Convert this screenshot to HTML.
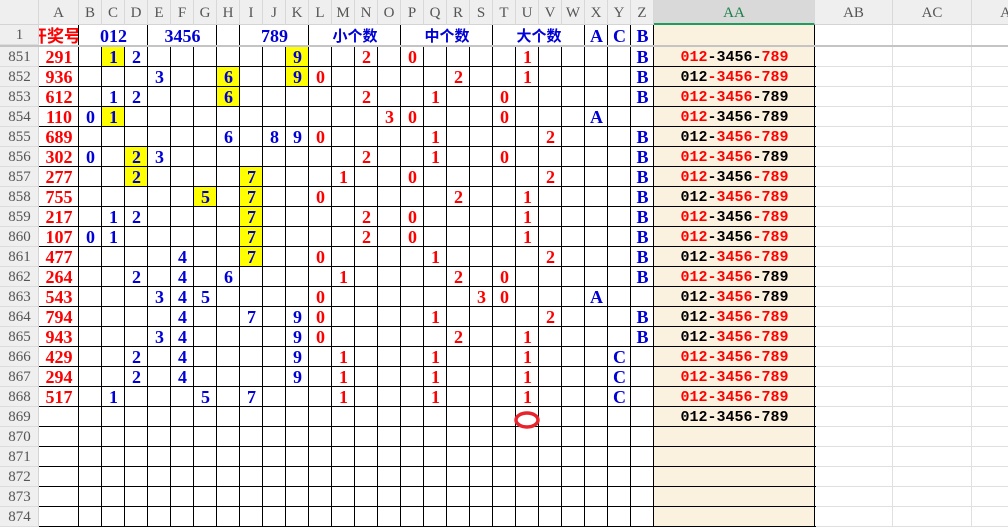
<!DOCTYPE html>
<html><head><meta charset="utf-8"><style>
*{margin:0;padding:0;box-sizing:border-box}
body{width:1008px;height:526px;overflow:hidden;background:#fff;position:relative;font-family:"Liberation Serif",serif}
.hd{position:absolute;top:0;left:0;width:1008px;height:25px;background:#efefef;border-bottom:1px solid #d4d4d4}
.hd span{position:absolute;top:0;height:25px;line-height:26px;text-align:center;font-size:15px;color:#555;border-right:1px solid #d8d8d8}
.rh{position:absolute;left:0;top:25px;width:39px;height:501px;background:#efefef;border-right:1px solid #d4d4d4}
.rn{position:absolute;left:0;width:39px;height:20px;line-height:21px;text-align:center;font-size:15px;color:#555;border-bottom:1px solid #dcdcdc}
.row{position:absolute;left:0;width:1008px;height:20px}
.row i{position:absolute;top:0;height:20px;width:23px;line-height:21px;text-align:center;font-style:normal;font-weight:bold;font-size:18px}
.row i.A{left:39px;width:40px;color:#f00}
.y{background:#ff0}
.b{color:#0000d8}.r{color:#f00}
.B{left:79px}.C{left:102px}.D{left:125px}.E{left:148px}.F{left:171px}.G{left:194px}.H{left:217px}.I{left:240px}.J{left:263px}.K{left:286px}.L{left:309px}.M{left:332px}.N{left:355px}.O{left:378px}.P{left:401px}.Q{left:424px}.R{left:447px}.S{left:470px}.T{left:493px}.U{left:516px}.V{left:539px}.W{left:562px}.X{left:585px}.Y{left:608px}.Z{left:631px}
.row i.AA{left:654px;width:161px;font-size:15px;color:#000;font-weight:bold;font-family:"Liberation Mono",monospace}
.row i.AA em{font-style:normal;color:#f00}
.cream{position:absolute;left:654px;top:25px;width:161px;height:501px;background:#fbf1df}
.hl{position:absolute;left:39px;top:47px;width:777px;height:480px;background:repeating-linear-gradient(to bottom,transparent 0 19px,#000 19px 20px)}
.vl{position:absolute;top:47px;width:1px;height:480px;background:#000}
.vg{position:absolute;left:78px;top:47px;width:577px;height:480px;background:repeating-linear-gradient(to right,#000 0 1px,transparent 1px 23px)}
.lg{position:absolute;left:816px;top:47px;width:192px;height:480px;background:repeating-linear-gradient(to bottom,transparent 0 19px,#e0e0e0 19px 20px)}
.frz{position:absolute;left:0;top:45px;width:1008px;height:2px;background:#c4c4c4}
.t1{position:absolute;top:25px;height:20px;line-height:22px;text-align:center;font-weight:bold;font-size:18px;color:#0000d8;font-family:"Liberation Serif","Noto Sans CJK SC",serif}
.cj{font-family:"Noto Sans CJK SC",sans-serif;font-size:15px;line-height:21px}
.v1{position:absolute;top:25px;height:20px;width:1px;background:#000}
</style></head><body>
<div class="hd">
<span style="left:0;width:39px"></span><span style="left:39px;width:40px">A</span>
<span style="left:79px;width:23px">B</span><span style="left:102px;width:23px">C</span><span style="left:125px;width:23px">D</span><span style="left:148px;width:23px">E</span><span style="left:171px;width:23px">F</span><span style="left:194px;width:23px">G</span><span style="left:217px;width:23px">H</span><span style="left:240px;width:23px">I</span><span style="left:263px;width:23px">J</span><span style="left:286px;width:23px">K</span><span style="left:309px;width:23px">L</span><span style="left:332px;width:23px">M</span><span style="left:355px;width:23px">N</span><span style="left:378px;width:23px">O</span><span style="left:401px;width:23px">P</span><span style="left:424px;width:23px">Q</span><span style="left:447px;width:23px">R</span><span style="left:470px;width:23px">S</span><span style="left:493px;width:23px">T</span><span style="left:516px;width:23px">U</span><span style="left:539px;width:23px">V</span><span style="left:562px;width:23px">W</span><span style="left:585px;width:23px">X</span><span style="left:608px;width:23px">Y</span><span style="left:631px;width:23px">Z</span>
<span style="left:654px;width:161px;background:#d9d9d9;color:#1a7f4b;border-bottom:2px solid #1f9d5f;height:25px">AA</span>
<span style="left:815px;width:78px">AB</span><span style="left:893px;width:79px">AC</span><span style="left:972px;width:79px">AD</span>
</div>
<div class="cream"></div>
<div class="rh">
<div class="rn" style="top:0">1</div>
<div class="rn" style="top:22px">851</div><div class="rn" style="top:42px">852</div><div class="rn" style="top:62px">853</div><div class="rn" style="top:82px">854</div><div class="rn" style="top:102px">855</div><div class="rn" style="top:122px">856</div><div class="rn" style="top:142px">857</div><div class="rn" style="top:162px">858</div><div class="rn" style="top:182px">859</div><div class="rn" style="top:202px">860</div><div class="rn" style="top:222px">861</div><div class="rn" style="top:242px">862</div><div class="rn" style="top:262px">863</div><div class="rn" style="top:282px">864</div><div class="rn" style="top:302px">865</div><div class="rn" style="top:322px">866</div><div class="rn" style="top:342px">867</div><div class="rn" style="top:362px">868</div><div class="rn" style="top:382px">869</div><div class="rn" style="top:402px">870</div><div class="rn" style="top:422px">871</div><div class="rn" style="top:442px">872</div><div class="rn" style="top:462px">873</div><div class="rn" style="top:482px">874</div>
</div>
<div style="position:absolute;left:39px;top:25px;width:40px;height:20px;overflow:hidden"><div class="cj" style="position:absolute;right:-2px;top:0;white-space:nowrap;color:#f00;font-weight:bold;font-size:17px;line-height:20px">开奖号</div></div>
<div class="t1" style="left:79px;width:69px">012</div>
<div class="t1" style="left:148px;width:69px">3456</div>
<div class="t1" style="left:240px;width:69px">789</div>
<div class="t1 cj" style="left:309px;width:92px">小个数</div>
<div class="t1 cj" style="left:401px;width:92px">中个数</div>
<div class="t1 cj" style="left:493px;width:92px">大个数</div>
<div class="t1" style="left:585px;width:23px">A</div><div class="t1" style="left:608px;width:23px">C</div><div class="t1" style="left:631px;width:23px">B</div>
<div class="v1" style="left:78px"></div><div class="v1" style="left:147px"></div><div class="v1" style="left:216px"></div><div class="v1" style="left:239px"></div><div class="v1" style="left:308px"></div><div class="v1" style="left:400px"></div><div class="v1" style="left:492px"></div><div class="v1" style="left:584px"></div><div class="v1" style="left:607px"></div><div class="v1" style="left:630px"></div><div class="v1" style="left:653px"></div><div class="v1" style="left:814px"></div>

<div class="row" style="top:47px"><i class="A">291</i><i class="C b y">1</i><i class="D b">2</i><i class="K b y">9</i><i class="N r">2</i><i class="P r">0</i><i class="U r">1</i><i class="Z b">B</i><i class="AA"><em>012</em>-3456-<em>789</em></i></div>
<div class="row" style="top:67px"><i class="A">936</i><i class="E b">3</i><i class="H b y">6</i><i class="K b y">9</i><i class="L r">0</i><i class="R r">2</i><i class="U r">1</i><i class="Z b">B</i><i class="AA">012<em>-3456-789</em></i></div>
<div class="row" style="top:87px"><i class="A">612</i><i class="C b">1</i><i class="D b">2</i><i class="H b y">6</i><i class="N r">2</i><i class="Q r">1</i><i class="T r">0</i><i class="Z b">B</i><i class="AA"><em>012-3456</em>-789</i></div>
<div class="row" style="top:107px"><i class="A">110</i><i class="B b">0</i><i class="C b y">1</i><i class="O r">3</i><i class="P r">0</i><i class="T r">0</i><i class="X b">A</i><i class="AA"><em>012</em>-3456-789</i></div>
<div class="row" style="top:127px"><i class="A">689</i><i class="H b">6</i><i class="J b">8</i><i class="K b">9</i><i class="L r">0</i><i class="Q r">1</i><i class="V r">2</i><i class="Z b">B</i><i class="AA">012-<em>3456-789</em></i></div>
<div class="row" style="top:147px"><i class="A">302</i><i class="B b">0</i><i class="D b y">2</i><i class="E b">3</i><i class="N r">2</i><i class="Q r">1</i><i class="T r">0</i><i class="Z b">B</i><i class="AA"><em>012-3456</em>-789</i></div>
<div class="row" style="top:167px"><i class="A">277</i><i class="D b y">2</i><i class="I b y">7</i><i class="M r">1</i><i class="P r">0</i><i class="V r">2</i><i class="Z b">B</i><i class="AA"><em>012</em>-3456<em>-789</em></i></div>
<div class="row" style="top:187px"><i class="A">755</i><i class="G b y">5</i><i class="I b y">7</i><i class="L r">0</i><i class="R r">2</i><i class="U r">1</i><i class="Z b">B</i><i class="AA">012-<em>3456-789</em></i></div>
<div class="row" style="top:207px"><i class="A">217</i><i class="C b">1</i><i class="D b">2</i><i class="I b y">7</i><i class="N r">2</i><i class="P r">0</i><i class="U r">1</i><i class="Z b">B</i><i class="AA"><em>012</em>-3456<em>-789</em></i></div>
<div class="row" style="top:227px"><i class="A">107</i><i class="B b">0</i><i class="C b">1</i><i class="I b y">7</i><i class="N r">2</i><i class="P r">0</i><i class="U r">1</i><i class="Z b">B</i><i class="AA"><em>012</em>-3456<em>-789</em></i></div>
<div class="row" style="top:247px"><i class="A">477</i><i class="F b">4</i><i class="I b y">7</i><i class="L r">0</i><i class="Q r">1</i><i class="V r">2</i><i class="Z b">B</i><i class="AA">012-<em>3456-789</em></i></div>
<div class="row" style="top:267px"><i class="A">264</i><i class="D b">2</i><i class="F b">4</i><i class="H b">6</i><i class="M r">1</i><i class="R r">2</i><i class="T r">0</i><i class="Z b">B</i><i class="AA"><em>012-3456</em>-789</i></div>
<div class="row" style="top:287px"><i class="A">543</i><i class="E b">3</i><i class="F b">4</i><i class="G b">5</i><i class="L r">0</i><i class="S r">3</i><i class="T r">0</i><i class="X b">A</i><i class="AA">012-<em>3456</em>-789</i></div>
<div class="row" style="top:307px"><i class="A">794</i><i class="F b">4</i><i class="I b">7</i><i class="K b">9</i><i class="L r">0</i><i class="Q r">1</i><i class="V r">2</i><i class="Z b">B</i><i class="AA">012-<em>3456-789</em></i></div>
<div class="row" style="top:327px"><i class="A">943</i><i class="E b">3</i><i class="F b">4</i><i class="K b">9</i><i class="L r">0</i><i class="R r">2</i><i class="U r">1</i><i class="Z b">B</i><i class="AA">012-<em>3456-789</em></i></div>
<div class="row" style="top:347px"><i class="A">429</i><i class="D b">2</i><i class="F b">4</i><i class="K b">9</i><i class="M r">1</i><i class="Q r">1</i><i class="U r">1</i><i class="Y b">C</i><i class="AA"><em>012-3456-789</em></i></div>
<div class="row" style="top:367px"><i class="A">294</i><i class="D b">2</i><i class="F b">4</i><i class="K b">9</i><i class="M r">1</i><i class="Q r">1</i><i class="U r">1</i><i class="Y b">C</i><i class="AA"><em>012-3456-789</em></i></div>
<div class="row" style="top:387px"><i class="A">517</i><i class="C b">1</i><i class="G b">5</i><i class="I b">7</i><i class="M r">1</i><i class="Q r">1</i><i class="U r">1</i><i class="Y b">C</i><i class="AA"><em>012-3456-789</em></i></div>
<div class="row" style="top:407px"><i class="AA">012-3456-789</i></div>

<div class="lg"></div>
<div style="position:absolute;left:892px;top:25px;width:1px;height:501px;background:#e0e0e0"></div>
<div style="position:absolute;left:971px;top:25px;width:1px;height:501px;background:#e0e0e0"></div>
<div class="hl"></div>
<div class="vg"></div>
<div class="vl" style="left:814px"></div>
<div class="frz"></div>
<svg style="position:absolute;left:512px;top:410px" width="30" height="22"><ellipse cx="15" cy="10" rx="11" ry="7" fill="none" stroke="#e8232c" stroke-width="3.5"/></svg>
</body></html>
